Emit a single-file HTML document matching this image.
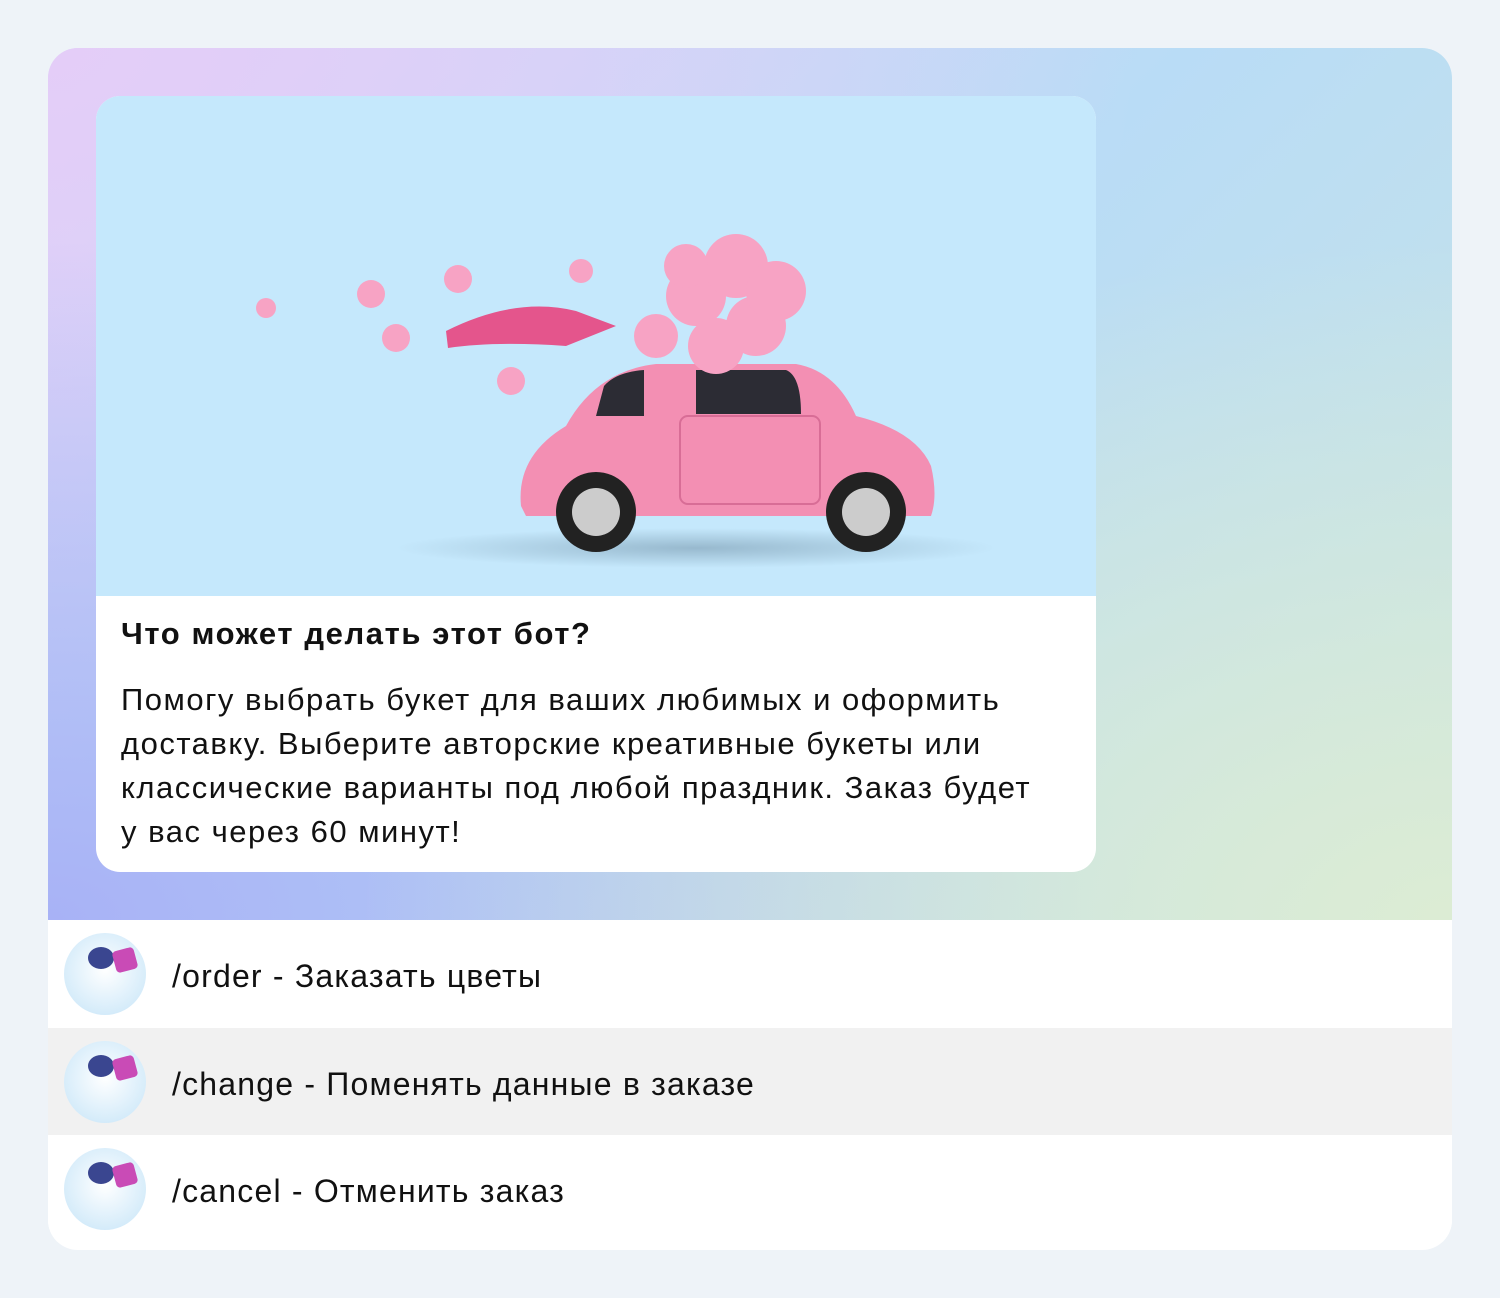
<!DOCTYPE html>
<html><head><meta charset="utf-8"><style>
*{margin:0;padding:0;box-sizing:border-box}
body{width:1500px;height:1298px;background:#eef3f8;font-family:"Liberation Sans",sans-serif;position:relative;overflow:hidden}
.panel{position:absolute;left:48px;top:48px;width:1404px;height:1202px;border-radius:30px;overflow:hidden;background:#fff}
.chat{position:absolute;left:0;top:0;width:1404px;height:872px;background:
radial-gradient(ellipse at 100% 100%,#dcecd4 0%,rgba(220,236,212,0) 55%),
radial-gradient(ellipse at 0% 100%,#a8b2f6 0%,rgba(168,178,246,0) 55%),
radial-gradient(ellipse at 0% 0%,#e4cdf8 0%,rgba(228,205,248,0) 55%),
linear-gradient(135deg,#d8d4f8,#b9dcf6 50%,#c8e4e4)}
.card{position:absolute;left:48px;top:48px;width:1000px;height:776px;border-radius:24px;overflow:hidden;background:#fff}
.img{height:500px;background:#c5e8fc;position:relative}
.title{position:absolute;left:25px;top:520px;font-weight:bold;font-size:31px;letter-spacing:1.6px;color:#111}
.body{position:absolute;left:25px;top:582px;font-size:31px;letter-spacing:1.5px;line-height:44px;color:#111;width:930px}
.row{position:absolute;left:0;width:1404px;height:107px;display:flex;align-items:center}
.av{width:82px;height:82px;border-radius:50%;background:radial-gradient(circle at 50% 45%,#fff 0%,#d6ecfa 70%,#bfe0f6 100%);margin-left:16px;position:relative;overflow:hidden;flex:none}
.txt{margin-left:26px;font-size:32px;letter-spacing:1.2px;color:#111;margin-top:6px}
.av::before{content:"";position:absolute;left:24px;top:14px;width:26px;height:22px;border-radius:50%;background:#3a4690}
.av::after{content:"";position:absolute;left:50px;top:16px;width:22px;height:22px;border-radius:4px;background:#c94bb6;transform:rotate(-15deg)}
</style></head><body>
<div class="panel">
<div class="chat">
<div class="card">
<div class="img">
<svg width="1000" height="500" viewBox="0 0 1000 500">
<defs><radialGradient id="sh"><stop offset="0" stop-color="#6a8aa0" stop-opacity=".5"/><stop offset="1" stop-color="#6a8aa0" stop-opacity="0"/></radialGradient></defs>
<ellipse cx="600" cy="452" rx="300" ry="20" fill="url(#sh)"/>
<path d="M425 410 Q420 360 470 330 Q500 275 560 268 L700 268 Q740 275 760 320 Q820 335 835 370 Q842 400 835 420 L430 420 Z" fill="#f38fb3"/>
<path d="M508 290 Q520 276 548 274 L548 320 L500 320 Z" fill="#2c2c34"/>
<path d="M600 274 L690 274 Q705 280 705 318 L600 318 Z" fill="#2c2c34"/>
<rect x="584" y="320" width="140" height="88" rx="8" fill="none" stroke="#d86d96" stroke-width="2"/>
<circle cx="500" cy="416" r="40" fill="#222"/><circle cx="500" cy="416" r="24" fill="#ccc"/>
<circle cx="770" cy="416" r="40" fill="#222"/><circle cx="770" cy="416" r="24" fill="#ccc"/>
<path d="M350 235 Q420 200 480 215 L520 230 L470 250 Q400 245 352 252 Z" fill="#e4558c"/>
<g fill="#f7a3c4">
<circle cx="600" cy="200" r="30"/><circle cx="640" cy="170" r="32"/><circle cx="660" cy="230" r="30"/><circle cx="620" cy="250" r="28"/><circle cx="680" cy="195" r="30"/><circle cx="590" cy="170" r="22"/><circle cx="560" cy="240" r="22"/>
<circle cx="170" cy="212" r="10"/><circle cx="275" cy="198" r="14"/><circle cx="300" cy="242" r="14"/><circle cx="362" cy="183" r="14"/><circle cx="415" cy="285" r="14"/><circle cx="485" cy="175" r="12"/>
</g>
</svg>
</div>
<div class="title">Что может делать этот бот?</div>
<div class="body">Помогу выбрать букет для ваших любимых и оформить доставку. Выберите авторские креативные букеты или классические варианты под любой праздник. Заказ будет у вас через 60 минут!</div>
</div>
</div>
<div class="row" style="top:872px;background:#fff"><div class="av"></div><div class="txt">/order - Заказать цветы</div></div>
<div class="row" style="top:980px;background:#f1f1f1"><div class="av"></div><div class="txt">/change - Поменять данные в заказе</div></div>
<div class="row" style="top:1087px;background:#fff"><div class="av"></div><div class="txt">/cancel - Отменить заказ</div></div>
</div>
</body></html>
